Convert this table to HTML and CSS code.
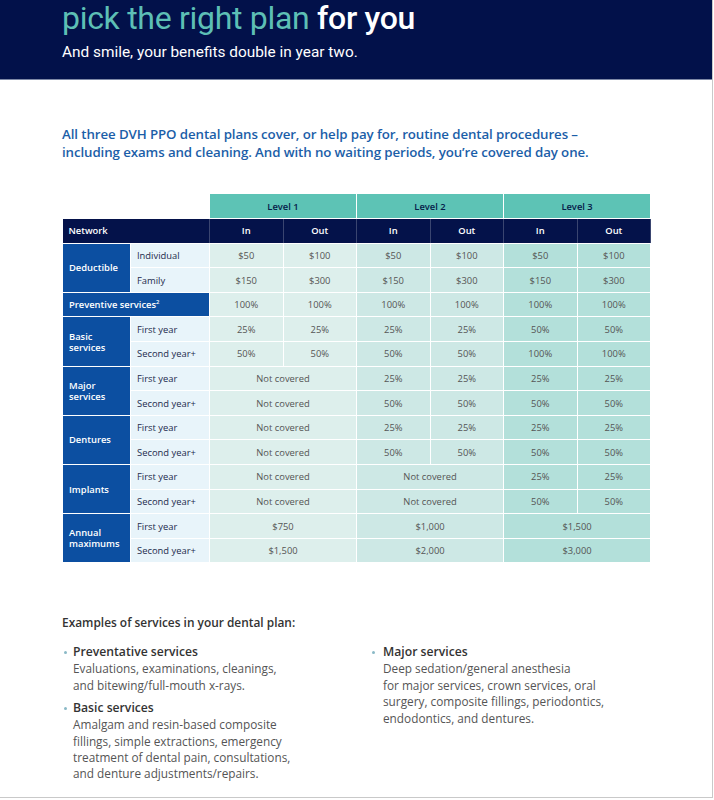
FILE: index.html
```html
<!DOCTYPE html>
<html lang="en">
<head>
<meta charset="utf-8">
<title>Pick the right plan for you</title>
<link rel="stylesheet" href="styles.css">
</head>
<body>
<div class="page">
  <header class="hero">
    <h1 class="hero-title"><span class="accent">pick the right plan</span> for you</h1>
    <p class="hero-sub">And smile, your benefits double in year two.</p>
  </header>
  <main class="content">
    <p class="intro">All three DVH PPO dental plans cover, or help pay for, routine dental procedures –<br>including exams and cleaning. And with no waiting periods, you’re covered day one.</p>

    <table class="plans">
      <colgroup>
        <col class="c-group"><col class="c-sub">
        <col class="c-val"><col class="c-val"><col class="c-val"><col class="c-val"><col class="c-val"><col class="c-val">
      </colgroup>
      <thead>
        <tr class="levels">
          <td colspan="2" class="blank"></td>
          <th colspan="2">Level 1</th>
          <th colspan="2">Level 2</th>
          <th colspan="2">Level 3</th>
        </tr>
        <tr class="network">
          <th colspan="2" class="net-label">Network</th>
          <th>In</th><th>Out</th><th>In</th><th>Out</th><th>In</th><th>Out</th>
        </tr>
      </thead>
      <tbody>
        <tr>
          <th rowspan="2" class="grp">Deductible</th><th class="sub">Individual</th>
          <td class="l1">$50</td><td class="l1">$100</td><td class="l2">$50</td><td class="l2">$100</td><td class="l3">$50</td><td class="l3">$100</td>
        </tr>
        <tr>
          <th class="sub">Family</th>
          <td class="l1">$150</td><td class="l1">$300</td><td class="l2">$150</td><td class="l2">$300</td><td class="l3">$150</td><td class="l3">$300</td>
        </tr>
        <tr>
          <th colspan="2" class="grp">Preventive services<sup>2</sup></th>
          <td class="l1">100%</td><td class="l1">100%</td><td class="l2">100%</td><td class="l2">100%</td><td class="l3">100%</td><td class="l3">100%</td>
        </tr>
        <tr>
          <th rowspan="2" class="grp">Basic services</th><th class="sub">First year</th>
          <td class="l1">25%</td><td class="l1">25%</td><td class="l2">25%</td><td class="l2">25%</td><td class="l3">50%</td><td class="l3">50%</td>
        </tr>
        <tr>
          <th class="sub">Second year+</th>
          <td class="l1">50%</td><td class="l1">50%</td><td class="l2">50%</td><td class="l2">50%</td><td class="l3">100%</td><td class="l3">100%</td>
        </tr>
        <tr>
          <th rowspan="2" class="grp">Major services</th><th class="sub">First year</th>
          <td colspan="2" class="l1">Not covered</td><td class="l2">25%</td><td class="l2">25%</td><td class="l3">25%</td><td class="l3">25%</td>
        </tr>
        <tr>
          <th class="sub">Second year+</th>
          <td colspan="2" class="l1">Not covered</td><td class="l2">50%</td><td class="l2">50%</td><td class="l3">50%</td><td class="l3">50%</td>
        </tr>
        <tr>
          <th rowspan="2" class="grp">Dentures</th><th class="sub">First year</th>
          <td colspan="2" class="l1">Not covered</td><td class="l2">25%</td><td class="l2">25%</td><td class="l3">25%</td><td class="l3">25%</td>
        </tr>
        <tr>
          <th class="sub">Second year+</th>
          <td colspan="2" class="l1">Not covered</td><td class="l2">50%</td><td class="l2">50%</td><td class="l3">50%</td><td class="l3">50%</td>
        </tr>
        <tr>
          <th rowspan="2" class="grp">Implants</th><th class="sub">First year</th>
          <td colspan="2" class="l1">Not covered</td><td colspan="2" class="l2">Not covered</td><td class="l3">25%</td><td class="l3">25%</td>
        </tr>
        <tr>
          <th class="sub">Second year+</th>
          <td colspan="2" class="l1">Not covered</td><td colspan="2" class="l2">Not covered</td><td class="l3">50%</td><td class="l3">50%</td>
        </tr>
        <tr>
          <th rowspan="2" class="grp">Annual maximums</th><th class="sub">First year</th>
          <td colspan="2" class="l1">$750</td><td colspan="2" class="l2">$1,000</td><td colspan="2" class="l3">$1,500</td>
        </tr>
        <tr>
          <th class="sub">Second year+</th>
          <td colspan="2" class="l1">$1,500</td><td colspan="2" class="l2">$2,000</td><td colspan="2" class="l3">$3,000</td>
        </tr>
      </tbody>
    </table>

    <section class="examples">
      <h2 class="examples-title">Examples of services in your dental plan:</h2>
      <div class="examples-cols">
        <ul class="svc-list">
          <li class="svc">
            <strong class="svc-name">Preventative services</strong>
            <span class="svc-desc">Evaluations, examinations, cleanings,<br>and bitewing/full-mouth x-rays.</span>
          </li>
          <li class="svc">
            <strong class="svc-name">Basic services</strong>
            <span class="svc-desc">Amalgam and resin-based composite<br>fillings, simple extractions, emergency<br>treatment of dental pain, consultations,<br>and denture adjustments/repairs.</span>
          </li>
        </ul>
        <ul class="svc-list">
          <li class="svc svc-wide">
            <strong class="svc-name">Major services</strong>
            <span class="svc-desc">Deep sedation/general anesthesia<br>for major services, crown services, oral<br>surgery, composite fillings, periodontics,<br>endodontics, and dentures.</span>
          </li>
        </ul>
      </div>
    </section>
  </main>
</div>
</body>
</html>
```

FILE: styles.css
```css
* { box-sizing: border-box; }

html, body {
  margin: 0;
  padding: 0;
  background: #ffffff;
}

body {
  font-family: "Open Sans", "Liberation Sans", sans-serif;
  color: #444;
}

.page {
  width: 713px;
  height: 798px;
  border-right: 1px solid #c9c9c9;
  border-bottom: 1px solid #c9c9c9;
  overflow: hidden;
}

/* Header */
.hero {
  height: 80px;
  background: #02114a;
  border-bottom: 1px solid #7d88a6;
  padding: 0 0 0 62px;
}

.hero-title {
  margin: 0;
  font-family: Roboto, "Liberation Sans", sans-serif;
  font-weight: 500;
  font-size: 32px;
  line-height: 36px;
  letter-spacing: -0.3px;
  color: #ffffff;
}

.hero-title .accent {
  color: #5dbfb5;
  font-weight: 400;
}

.hero-sub {
  margin: 7px 0 0;
  font-family: Roboto, "Liberation Sans", sans-serif;
  font-size: 15.4px;
  line-height: 18px;
  color: #ffffff;
}

/* Content */
.content {
  padding: 45px 0 0 62px;
}

.intro {
  margin: 0;
  font-size: 13.3px;
  line-height: 18px;
  font-weight: 600;
  color: #1b5ea8;
  letter-spacing: -0.1px;
}

/* Table */
.plans {
  margin-top: 33px;
  width: 588px;
  border-collapse: collapse;
  table-layout: fixed;
  font-size: 9.4px;
}

.c-group { width: 68px; }
.c-sub { width: 79px; }
.c-val { width: 73.5px; }

.plans th,
.plans td {
  border: 1px solid #ffffff;
  height: 24.6px;
  padding: 0;
  text-align: center;
  vertical-align: middle;
  font-weight: 400;
}

.plans td {
  color: #555;
}

.levels th {
  background: #5dc3b5;
  color: #06204a;
  font-weight: 600;
  height: 24px;
  border-top: 0;
}

.levels .blank {
  background: #ffffff;
  border: 0;
}

.network th {
  background: #04124a;
  color: #ffffff;
  font-weight: 600;
  border-color: #ffffff;
  border-left-color: #3a4570;
  border-right-color: #3a4570;
}

.network .net-label {
  text-align: left;
  padding-left: 6px;
  border-left: 0;
}

.plans .grp {
  background: #0c4fa1;
  color: #ffffff;
  font-weight: 600;
  text-align: left;
  padding: 0 4px 0 6px;
  line-height: 11px;
}

.plans .grp sup {
  font-size: 6px;
  line-height: 0;
}

.plans .sub {
  background: #e8f4fa;
  color: #1d2a4d;
  font-weight: 500;
  text-align: left;
  padding-left: 6px;
}

.plans .l1 { background: #ddefec; }
.plans .l2 { background: #cde8e5; }
.plans .l3 { background: #b3e0da; }

/* Examples */
.examples {
  margin-top: 51px;
}

.examples-title {
  margin: 0;
  font-size: 11.9px;
  line-height: 16px;
  font-weight: 600;
  color: #333;
}

.examples-cols {
  display: grid;
  grid-template-columns: 308px 1fr;
  margin-top: 14px;
}

.svc-list {
  list-style: none;
  margin: 0;
  padding: 0;
}

.svc {
  position: relative;
  padding-left: 11px;
  margin-bottom: 7px;
}

.svc-wide {
  padding-left: 13px;
}

.svc::before {
  content: "";
  position: absolute;
  left: 2px;
  top: 7px;
  width: 3px;
  height: 3px;
  border-radius: 50%;
  background: #8ab9c6;
}

.svc-name {
  display: block;
  font-size: 12.2px;
  line-height: 16px;
  font-weight: 600;
  color: #333;
}

.svc-desc {
  display: block;
  font-size: 11.8px;
  line-height: 16.4px;
  color: #555;
}
```
